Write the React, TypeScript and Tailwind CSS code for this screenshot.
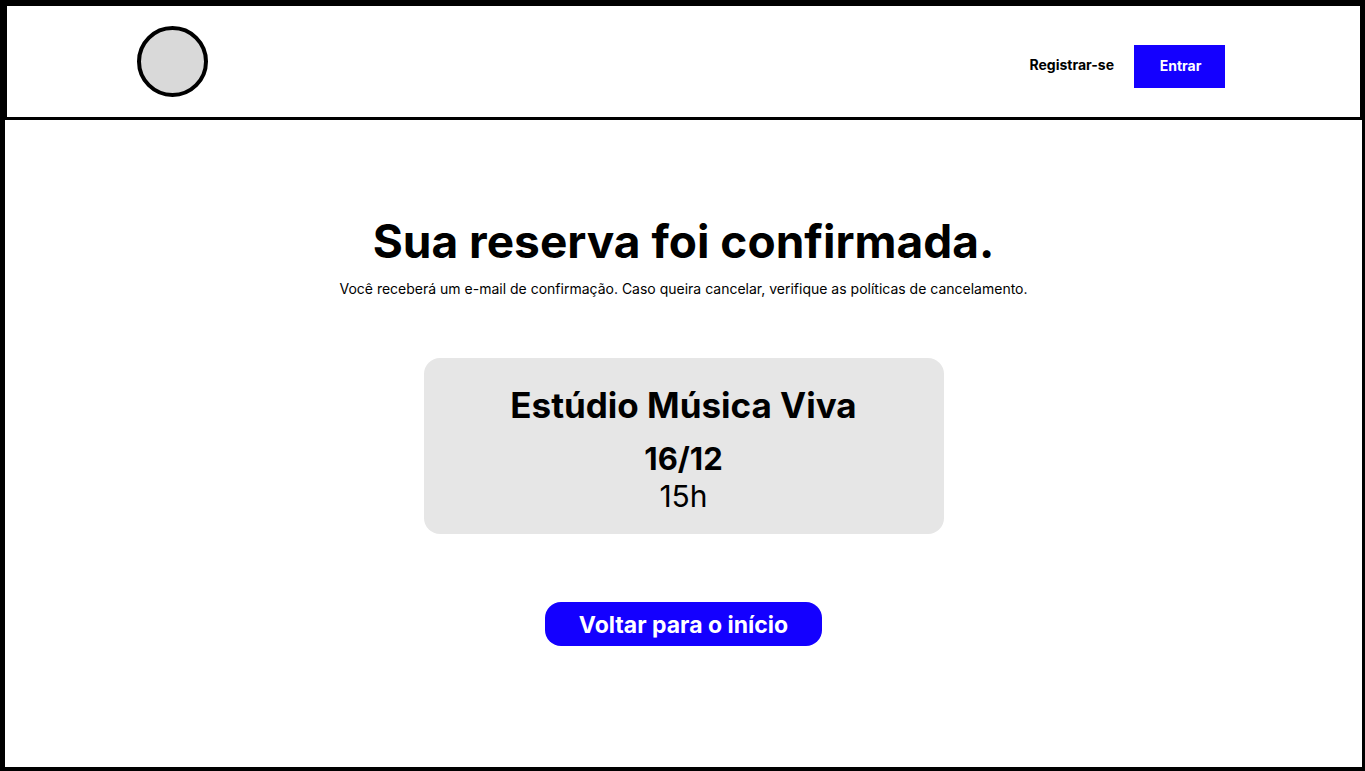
export default function App() {
  return (
    <div className="flex min-h-screen flex-col border-y-4 border-l-[5px] border-r-[3px] border-black bg-white font-['Inter',sans-serif] text-black">
      <header className="flex h-[116px] items-center justify-between border-x-2 border-t-2 border-b-3 border-black pl-[130px] pr-[135px]">
        <a href="#" aria-label="Início" className="block size-[71px] rounded-full border-4 border-black bg-[#d9d9d9]" />
        <nav className="flex items-start gap-5 pt-[9px]">
          <a href="#" className="pt-2 text-sm leading-6 font-bold">Registrar-se</a>
          <button type="button" className="h-[43px] w-[91px] bg-[#1400ff] pl-[2px] text-sm font-bold text-white">Entrar</button>
        </nav>
      </header>
      <main className="flex flex-1 flex-col items-center pt-[92px] text-center">
        <h1 className="text-[46px] leading-[58px] font-bold">Sua reserva foi confirmada.</h1>
        <p className="mt-2 text-sm leading-[22px]">
          Você receberá um e-mail de confirmação. Caso queira cancelar, verifique as políticas de cancelamento.
        </p>
        <section className="mt-[58px] w-[520px] rounded-2xl bg-[#e6e6e6] pt-6 pb-5">
          <h2 className="text-[35px] leading-[46px] font-bold">Estúdio Música Viva</h2>
          <p className="mt-3 text-[31px] leading-[38px] font-bold">16/12</p>
          <p className="text-3xl leading-[36px]">15h</p>
        </section>
        <button type="button" className="mt-[68px] h-11 w-[277px] rounded-2xl bg-[#1400ff] pt-[2px] text-[23px] leading-7 font-bold text-white">
          Voltar para o início
        </button>
      </main>
    </div>
  );
}
